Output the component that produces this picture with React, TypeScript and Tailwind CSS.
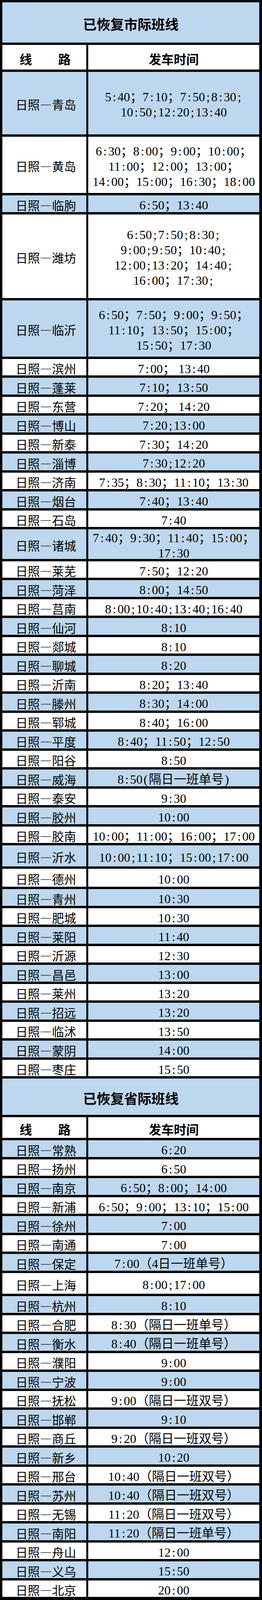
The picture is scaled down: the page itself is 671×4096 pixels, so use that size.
import React from "react";

type Row = { r: string; t: string[]; h?: string };

const sec1: Row[] = [
  { r: "青岛", t: ["5:40；7:10；7:50;8:30;", "10:50;12:20;13:40"], h: "h-[160px]" },
  { r: "黄岛", t: ["6:30；8:00；9:00；10:00；", "11:00；12:00；13:00；", "14:00；15:00；16:30；18:00"], h: "h-[144px]" },
  { r: "临朐", t: ["6:50；13:40"] },
  { r: "潍坊", t: ["6:50;7:50;8:30;", "9:00;9:50；10:40;", "12:00;13:20；14:40;", "16:00；17:30;"], h: "h-[214px]" },
  { r: "临沂", t: ["6:50；7:50；9:00；9:50；", "11:10；13:50；15:00；", "15:50；17:30"], h: "h-[144px]" },
  { r: "滨州", t: ["7:00； 13:40"] },
  { r: "蓬莱", t: ["7:10；13:50"] },
  { r: "东营", t: ["7:20； 14:20"] },
  { r: "博山", t: ["7:20;13:00"] },
  { r: "新泰", t: ["7:30；14:20"] },
  { r: "淄博", t: ["7:30;12:20"] },
  { r: "济南", t: ["7:35；8:30；11:10；13:30"] },
  { r: "烟台", t: ["7:40；13:40"] },
  { r: "石岛", t: ["7:40"] },
  { r: "诸城", t: ["7:40；9:30；11:40；15:00；", "17:30"], h: "h-[76px]" },
  { r: "莱芜", t: ["7:50；12:20"] },
  { r: "菏泽", t: ["8:00；14:50"] },
  { r: "莒南", t: ["8:00;10:40;13:40;16:40"] },
  { r: "仙河", t: ["8:10"] },
  { r: "郯城", t: ["8:10"] },
  { r: "聊城", t: ["8:20"] },
  { r: "沂南", t: ["8:20；13:40"] },
  { r: "滕州", t: ["8:30；14:00"] },
  { r: "郓城", t: ["8:40；16:00"] },
  { r: "平度", t: ["8:40；11:50；12:50"] },
  { r: "阳谷", t: ["8:50"] },
  { r: "威海", t: ["8:50(隔日一班单号)"] },
  { r: "泰安", t: ["9:30"] },
  { r: "胶州", t: ["10:00"] },
  { r: "胶南", t: ["10:00；11:00；16:00；17:00"] },
  { r: "沂水", t: ["10:00;11:10；15:00;17:00"], h: "h-[54px]" },
  { r: "德州", t: ["10:00"], h: "h-[46px]" },
  { r: "青州", t: ["10:30"] },
  { r: "肥城", t: ["10:30"] },
  { r: "莱阳", t: ["11:40"] },
  { r: "沂源", t: ["12:30"] },
  { r: "昌邑", t: ["13:00"] },
  { r: "莱州", t: ["13:20"] },
  { r: "招远", t: ["13:20"] },
  { r: "临沭", t: ["13:50"] },
  { r: "蒙阴", t: ["14:00"] },
  { r: "枣庄", t: ["15:50"] },
];

const sec2: Row[] = [
  { r: "常熟", t: ["6:20"] },
  { r: "扬州", t: ["6:50"] },
  { r: "南京", t: ["6:50；8:00；14:00"] },
  { r: "新浦", t: ["6:50；9:00；13:10；15:00"] },
  { r: "徐州", t: ["7:00"] },
  { r: "南通", t: ["7:00"] },
  { r: "保定", t: ["7:00（4日一班单号）"] },
  { r: "上海", t: ["8:00;17:00"], h: "h-[53px]" },
  { r: "杭州", t: ["8:10"] },
  { r: "合肥", t: ["8:30（隔日一班单号）"] },
  { r: "衡水", t: ["8:40（隔日一班单号）"] },
  { r: "濮阳", t: ["9:00"] },
  { r: "宁波", t: ["9:00"] },
  { r: "抚松", t: ["9:00（隔日一班双号）"] },
  { r: "邯郸", t: ["9:10"] },
  { r: "商丘", t: ["9:20（隔日一班双号）"] },
  { r: "新乡", t: ["10:20"] },
  { r: "邢台", t: ["10:40（隔日一班双号）"] },
  { r: "苏州", t: ["10:40（隔日一班双号）"] },
  { r: "无锡", t: ["11:20（隔日一班双号）"] },
  { r: "南阳", t: ["11:20（隔日一班单号）"] },
  { r: "舟山", t: ["12:00"] },
  { r: "义乌", t: ["15:50"] },
  { r: "北京", t: ["20:00"] },
];

function TimeText({ s }: { s: string }) {
  const parts: React.ReactNode[] = [];
  let buf = "";
  let k = 0;
  for (const ch of Array.from(s)) {
    if (":;()".includes(ch)) {
      if (buf) {
        parts.push(<span key={k++}>{buf}</span>);
        buf = "";
      }
      parts.push(
        <span key={k++} className="inline-block w-[0.5em] text-center">
          {ch}
        </span>
      );
    } else {
      buf += ch;
    }
  }
  if (buf) parts.push(<span key={k++}>{buf}</span>);
  return <>{parts}</>;
}

function DataRow({ row, blue }: { row: Row; blue: boolean }) {
  const bg = blue ? "bg-[#bdd7ee]" : "bg-white";
  const h = row.h ? row.h : blue ? "h-[43px]" : "h-[42px]";
  return (
    <div className={`flex gap-[5px] ${h}`}>
      <div className={`w-[215px] shrink-0 ${bg} flex items-center justify-center pt-[5px]`}>
        <span className="pl-[8px] text-[31px] leading-none whitespace-nowrap text-black [font-family:'Noto_Sans_CJK_SC',sans-serif]">
          日照—{row.r}
        </span>
      </div>
      <div className={`flex-1 ${bg} flex flex-col items-center justify-center pt-[8px]`}>
        {row.t.map((line, i) => (
          <div
            key={i}
            className="h-[39px] leading-[39px] text-[32px] whitespace-nowrap text-black [font-family:'Liberation_Serif','Noto_Sans_CJK_SC',serif]"
          >
            <TimeText s={line} />
          </div>
        ))}
      </div>
    </div>
  );
}

function Title({ text, h }: { text: string; h: string }) {
  return (
    <div className={`${h} bg-[#bdd7ee] flex items-center justify-center pt-[6px]`}>
      <span className="text-[35px] font-bold leading-none text-black [font-family:'Noto_Sans_CJK_SC',sans-serif]">
        {text}
      </span>
    </div>
  );
}

function Header({ h }: { h: string }) {
  return (
    <div className={`flex gap-[5px] ${h}`}>
      <div className="w-[215px] shrink-0 bg-white flex items-center justify-center gap-[67px] pl-[4px] pt-[6px] text-[32px] font-bold leading-none text-black [font-family:'Noto_Sans_CJK_SC',sans-serif]">
        <span>线</span>
        <span>路</span>
      </div>
      <div className="flex-1 bg-white flex items-center justify-center pt-[6px] text-[32px] font-bold leading-none text-black [font-family:'Noto_Sans_CJK_SC',sans-serif]">
        发车时间
      </div>
    </div>
  );
}

export default function App() {
  return (
    <div lang="zh-CN" className="w-[671px] bg-black pt-[6px] pb-[8px] pl-[6px] pr-[7px] flex flex-col gap-[6px]">
      <Title text="已恢复市际班线" h="h-[103px]" />
      <Header h="h-[63px]" />
      {sec1.map((row, i) => (
        <DataRow key={"a" + i} row={row} blue={i % 2 === 0} />
      ))}
      <Title text="已恢复省际班线" h="h-[93px]" />
      <Header h="h-[53px]" />
      {sec2.map((row, i) => (
        <DataRow key={"b" + i} row={row} blue={i % 2 === 0} />
      ))}
    </div>
  );
}
